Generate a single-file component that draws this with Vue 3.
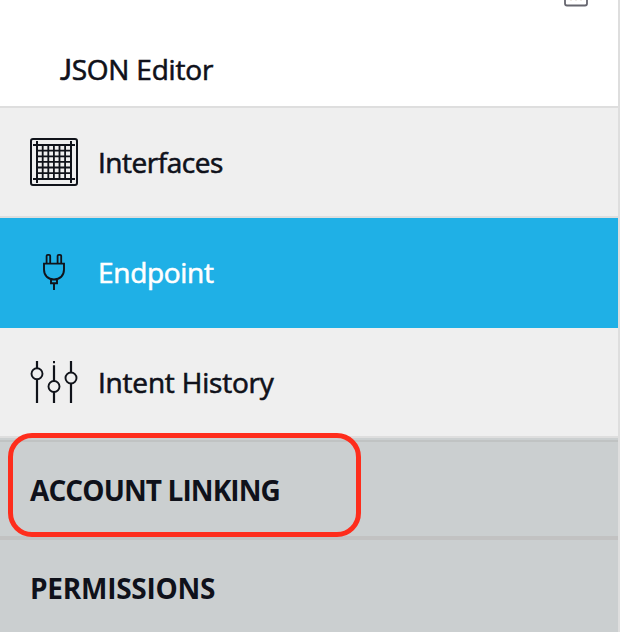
<script setup>
const gridLines = [12.7, 18.3, 23.9, 29.5, 35.1]
const sliders = [
  { x: 7, y: 13.7 },
  { x: 24, y: 26.5 },
  { x: 41, y: 18 },
]
</script>

<template>
  <div class="page">
    <nav class="sidebar">
      <div class="row editor">
        <svg class="clip" viewBox="0 0 26 8" width="26" height="8">
          <path d="M2 -2V3.5Q2 5.5 4 5.5H22Q24 5.5 24 3.5V-2" fill="none" stroke="#66666f" stroke-width="1.8" />
          <path d="M7 .5H9M12 .5H14M17 .5H19" stroke="#eeebe5" />
        </svg>
        <span class="label json"><span class="cap">J</span>SON Editor</span>
      </div>
      <div class="row item">
        <svg class="icon" viewBox="0 0 48 48">
          <rect x="1" y="1" width="46" height="46" rx="2" />
          <path d="M7 3V45M41 3V45M3 7H45M3 41H45" />
          <path v-for="p in gridLines" :key="p" :d="`M${p} 7V41M7 ${p}H41`" stroke-width="1.8" />
        </svg>
        <span class="label interfaces">Interfaces</span>
      </div>
      <div class="row item active">
        <svg class="icon" viewBox="0 0 48 48">
          <path d="M16.6 15.5V8Q16.6 6.8 17.8 6.8H19Q20.2 6.8 20.2 8V15.5M27.6 15.5V8Q27.6 6.8 28.8 6.8H30Q31.2 6.8 31.2 8V15.5" stroke-width="1.8" />
          <path d="M14 15.6H34V21.5C34 27.5 30 31.5 24 31.5S14 27.5 14 21.5ZM21 31.5V35.3H27V31.5M24 35.3V42" stroke-width="1.9" />
        </svg>
        <span class="label endpoint">Endpoint</span>
      </div>
      <div class="row item history">
        <svg class="icon lowered" viewBox="0 0 48 48">
          <g v-for="(s, i) in sliders" :key="s.x">
            <path :d="`M${s.x} ${i === 1 ? 5.2 : 1}V${s.y - 5.6}M${s.x} ${s.y + 5.6}V43`" stroke-width="2.2" />
            <circle :cx="s.x" :cy="s.y" r="5.5" stroke-width="1.9" />
          </g>
          <path d="M24 1V3.3" />
        </svg>
        <span class="label intent">Intent History</span>
      </div>
      <div class="section account">
        <span class="label linking">ACCOUNT LINKING</span>
        <div class="highlight"></div>
      </div>
      <div class="section permissions">
        <span class="label perm">PERMISSIONS</span>
      </div>
    </nav>
  </div>
</template>

<style>
body { margin: 0; background: #fff; }
</style>

<style scoped>
.page { height: 632px; overflow: hidden; background: #fff; font-family: "Open Sans", "Noto Sans", sans-serif; color: #0f111a; }
.sidebar { width: 618px; height: 632px; display: flex; flex-direction: column; border-right: 2px solid #dedede; }
.row { box-sizing: border-box; height: 110px; flex: none; display: flex; align-items: center; border-bottom: 2px solid #dedede; background: #efefef; }
.editor { height: 108px; background: #fff; padding: 32px 0 0 60px; position: relative; }
.clip { position: absolute; left: 563px; top: 0; }
.item { padding-left: 30px; gap: 20px; }
.active { background: #1fb0e6; border-color: #1fb0e6; color: #fff; }
.icon { width: 48px; height: 48px; flex: none; fill: none; stroke: #10131a; stroke-width: 2; }
.lowered { margin-top: 4px; }
.label { font-size: 28px; line-height: 36px; white-space: nowrap; -webkit-text-stroke: 0.6px currentColor; }
.cap { font-family: Lato, sans-serif; }
.json { letter-spacing: -0.2px; }
.interfaces { letter-spacing: -0.48px; }
.endpoint { letter-spacing: -0.3px; }
.intent { letter-spacing: -0.2px; }
.section { box-sizing: border-box; flex: none; display: flex; align-items: center; padding-left: 30px; background: #cbcfd0; position: relative; }
.section .label { font-weight: 700; -webkit-text-stroke: 0; }
.linking { letter-spacing: -0.9px; }
.perm { letter-spacing: -0.25px; }
.account { height: 102px; border-bottom: 4px solid #c2c2c2; background: linear-gradient(#cbcfd0 2px, #c0c3c3 2px, #c0c3c3 4px, #cbcfd0 4px); padding-top: 6px; }
.permissions { height: 92px; padding-top: 4px; }
.highlight { box-sizing: border-box; position: absolute; left: 8px; top: -5px; width: 353px; height: 104px; border: 5px solid #fe2d1c; border-radius: 24px; }
</style>
